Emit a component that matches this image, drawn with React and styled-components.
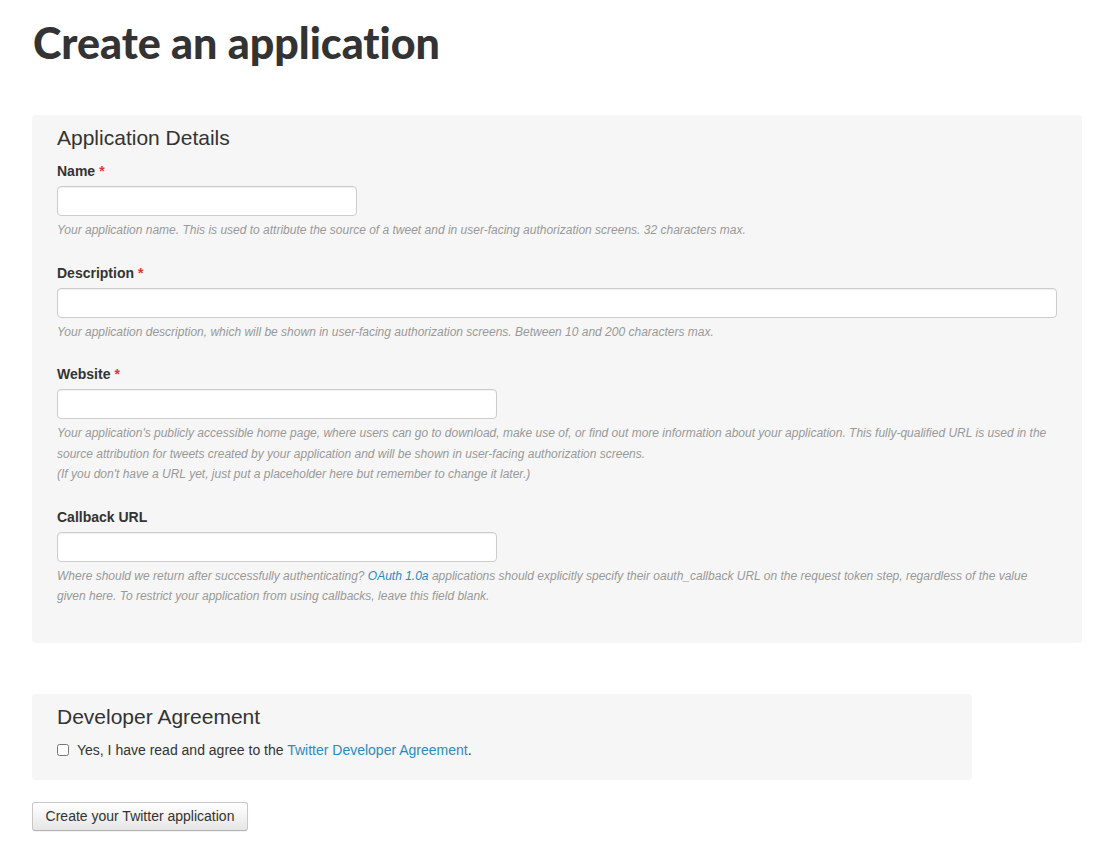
import styled, { createGlobalStyle } from 'styled-components'

const GlobalStyle = createGlobalStyle`
  body {
    margin: 0;
    background: #ffffff;
    font-family: "Liberation Sans", Arial, sans-serif;
    color: #333333;
  }
`

const Page = styled.div`
  padding: 18px 34px 30px 32px;
`

const Title = styled.h1`
  font-family: Lato, "Liberation Sans", sans-serif;
  font-weight: 900;
  font-size: 43px;
  line-height: 50px;
  margin: 0 0 47px 1px;
  color: #333333;
  font-variant-ligatures: none;
`

const Panel = styled.div`
  background: #f6f6f6;
  border-radius: 4px;
  padding: ${p => p.$pad || '11px 25px 36px'};
  width: ${p => p.$width || 'auto'};
  margin-bottom: ${p => p.$gap || '0'};
  box-sizing: border-box;
`

const Heading = styled.h3`
  font-size: 21px;
  font-weight: 400;
  line-height: 24px;
  margin: 0 0 11px;
  color: #333333;
`

const Field = styled.div`
  margin-bottom: 22px;
  &:last-child { margin-bottom: 0; }
`

const Label = styled.label`
  display: block;
  font-size: 14px;
  font-weight: 700;
  line-height: 20px;
  margin-bottom: 5px;
`

const Required = styled.span`
  color: #e0362c;
  margin-left: 4px;
`

const Input = styled.input`
  display: block;
  width: ${p => p.$w}px;
  height: 30px;
  box-sizing: border-box;
  border: 1px solid #cccccc;
  border-radius: 4px;
  background: #ffffff;
  box-shadow: inset 0 1px 1px rgba(0, 0, 0, 0.06);
  padding: 4px 6px;
  font-size: 14px;
  outline: none;
`

const Help = styled.p`
  margin: 4px 0 0;
  font-size: 12px;
  font-style: italic;
  line-height: 20.5px;
  color: #999999;
`

const Link = styled.a`
  color: #2a8bc2;
  text-decoration: none;
  font-style: ${p => (p.$italic ? 'italic' : 'normal')};
`

const CheckRow = styled.label`
  display: flex;
  align-items: center;
  gap: 8px;
  font-size: 14px;
  line-height: 20px;
  color: #333333;
`

const Check = styled.input`
  margin: 0;
  width: 12px;
  height: 12px;
`

const Button = styled.button`
  margin-top: 22px;
  width: 216px;
  height: 29px;
  font-family: "Liberation Sans", Arial, sans-serif;
  font-size: 14px;
  color: #333333;
  background: linear-gradient(#ffffff, #e6e6e6);
  border: 1px solid #c8c8c8;
  border-bottom-color: #b3b3b3;
  border-radius: 3px;
  box-shadow: 0 1px 1px rgba(0, 0, 0, 0.05);
  cursor: pointer;
`

export default function App() {
  return (
    <>
      <GlobalStyle />
      <Page>
        <Title>Create an application</Title>

        <Panel $gap="51px">
          <Heading>Application Details</Heading>

          <Field>
            <Label>Name<Required>*</Required></Label>
            <Input $w={300} />
            <Help>
              Your application name. This is used to attribute the source of a tweet and in user-facing authorization screens. 32 characters max.
            </Help>
          </Field>

          <Field>
            <Label>Description<Required>*</Required></Label>
            <Input $w={1000} />
            <Help>
              Your application description, which will be shown in user-facing authorization screens. Between 10 and 200 characters max.
            </Help>
          </Field>

          <Field>
            <Label>Website<Required>*</Required></Label>
            <Input $w={440} />
            <Help>
              Your application's publicly accessible home page, where users can go to download, make use of, or find out more information about your application. This fully-qualified URL is used in the source attribution for tweets created by your application and will be shown in user-facing authorization screens.
              <br />
              (If you don't have a URL yet, just put a placeholder here but remember to change it later.)
            </Help>
          </Field>

          <Field>
            <Label>Callback URL</Label>
            <Input $w={440} />
            <Help>
              Where should we return after successfully authenticating? <Link $italic href="#">OAuth 1.0a</Link> applications should explicitly specify their oauth_callback URL on the request token step, regardless of the value given here. To restrict your application from using callbacks, leave this field blank.
            </Help>
          </Field>
        </Panel>

        <Panel $width="940px" $pad="11px 25px 20px">
          <Heading>Developer Agreement</Heading>
          <CheckRow>
            <Check type="checkbox" />
            <span>
              Yes, I have read and agree to the <Link href="#">Twitter Developer Agreement</Link>.
            </span>
          </CheckRow>
        </Panel>

        <Button>Create your Twitter application</Button>
      </Page>
    </>
  )
}
